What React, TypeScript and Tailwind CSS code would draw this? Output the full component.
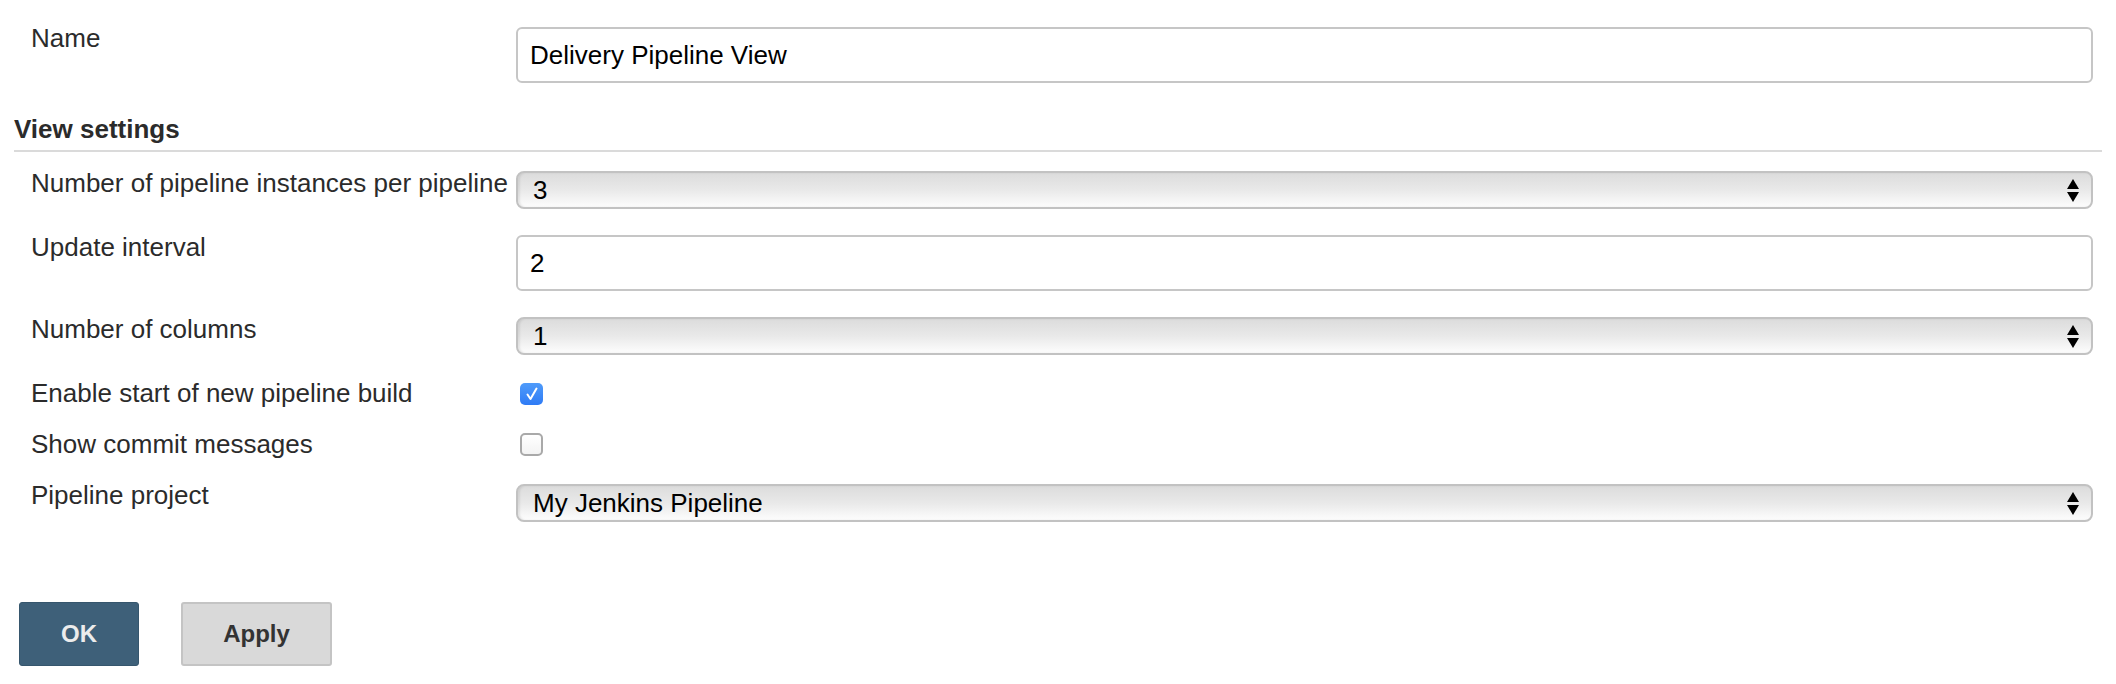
import React from "react";

const font = "font-['Liberation_Sans','Helvetica','Arial',sans-serif]";

function Row({
	label,
	children,
	className = "",
	labelClass = "pt-[2px]",
}: {
	label: string;
	children: React.ReactNode;
	className?: string;
	labelClass?: string;
}) {
	return (
		<div className={`flex items-start ${className}`}>
			<div
				className={`w-[502px] shrink-0 pl-[17px] text-[26px] leading-[20px] text-[#2b2b2b] ${labelClass}`}
			>
				{label}
			</div>
			<div className="flex-1 pr-[9px]">{children}</div>
		</div>
	);
}

function TextBox({ value }: { value: string }) {
	return (
		<div className="flex h-[56px] items-center rounded-[6px] border-2 border-[#c6c6c6] bg-white pl-[12px] text-[26px] text-black">
			{value}
		</div>
	);
}

function Select({ value }: { value: string }) {
	return (
		<div className="flex h-[38px] items-center justify-between rounded-[8px] border-2 border-[#c2c2c2] bg-linear-to-b from-[#dcdcdc] via-[#e9e9e9] to-[#fdfdfd] pl-[15px] pr-[12px] text-[26px] text-black shadow-[inset_2px_0_2px_rgba(0,0,0,0.08)]">
			<span className="leading-none">{value}</span>
			<svg width="12" height="23" viewBox="0 0 12 23">
				<polygon points="0,10 6,0 12,10" fill="#000" />
				<polygon points="0,13 12,13 6,23" fill="#000" />
			</svg>
		</div>
	);
}

function CheckBox({ checked }: { checked: boolean }) {
	if (checked) {
		return (
			<div className="ml-[4px] flex h-[22px] w-[23px] items-center justify-center rounded-[5px] bg-linear-to-b from-[#4f9bfa] to-[#2f7bf5]">
				<svg width="12" height="14" viewBox="0 0 12 14">
					<path
						d="M1.5 7.5 L4.5 12 L10.5 1.5"
						stroke="#fff"
						strokeWidth="2"
						fill="none"
						strokeLinecap="round"
						strokeLinejoin="round"
					/>
				</svg>
			</div>
		);
	}
	return (
		<div className="ml-[4px] h-[23px] w-[23px] rounded-[5px] border-2 border-[#a9a9a9] bg-linear-to-b from-white to-[#f3f3f3]" />
	);
}

export default function App() {
	return (
		<div className={`min-h-screen bg-white px-[14px] pt-[27px] ${font}`}>
			<Row label="Name" labelClass="pt-[1px]">
				<TextBox value="Delivery Pipeline View" />
			</Row>

			<div className="mt-[36px] border-b-2 border-[#dadada] pb-[11px] text-[26px] font-bold leading-[20px] text-[#2b2b2b]">
				View settings
			</div>

			<Row label="Number of pipeline instances per pipeline" className="mt-[19px]">
				<Select value="3" />
			</Row>
			<Row label="Update interval" className="mt-[26px]">
				<TextBox value="2" />
			</Row>
			<Row label="Number of columns" className="mt-[26px]">
				<Select value="1" />
			</Row>
			<Row label="Enable start of new pipeline build" className="mt-[28px]" labelClass="pt-0">
				<CheckBox checked />
			</Row>
			<Row label="Show commit messages" className="mt-[28px]" labelClass="pt-[1px]">
				<CheckBox checked={false} />
			</Row>
			<Row label="Pipeline project" className="mt-[28px]" labelClass="pt-[1px]">
				<Select value="My Jenkins Pipeline" />
			</Row>

			<div className="ml-[5px] mt-[80px] flex gap-[42px]">
				<button className="h-[64px] w-[120px] rounded-[3px] border border-[#36566d] bg-[#3e6079] text-[24px] font-bold text-[#ececec]">
					OK
				</button>
				<button className="h-[64px] w-[151px] rounded-[3px] border-2 border-[#c4c4c4] bg-[#d9d9d9] text-[24px] font-bold text-[#333]">
					Apply
				</button>
			</div>
		</div>
	);
}
